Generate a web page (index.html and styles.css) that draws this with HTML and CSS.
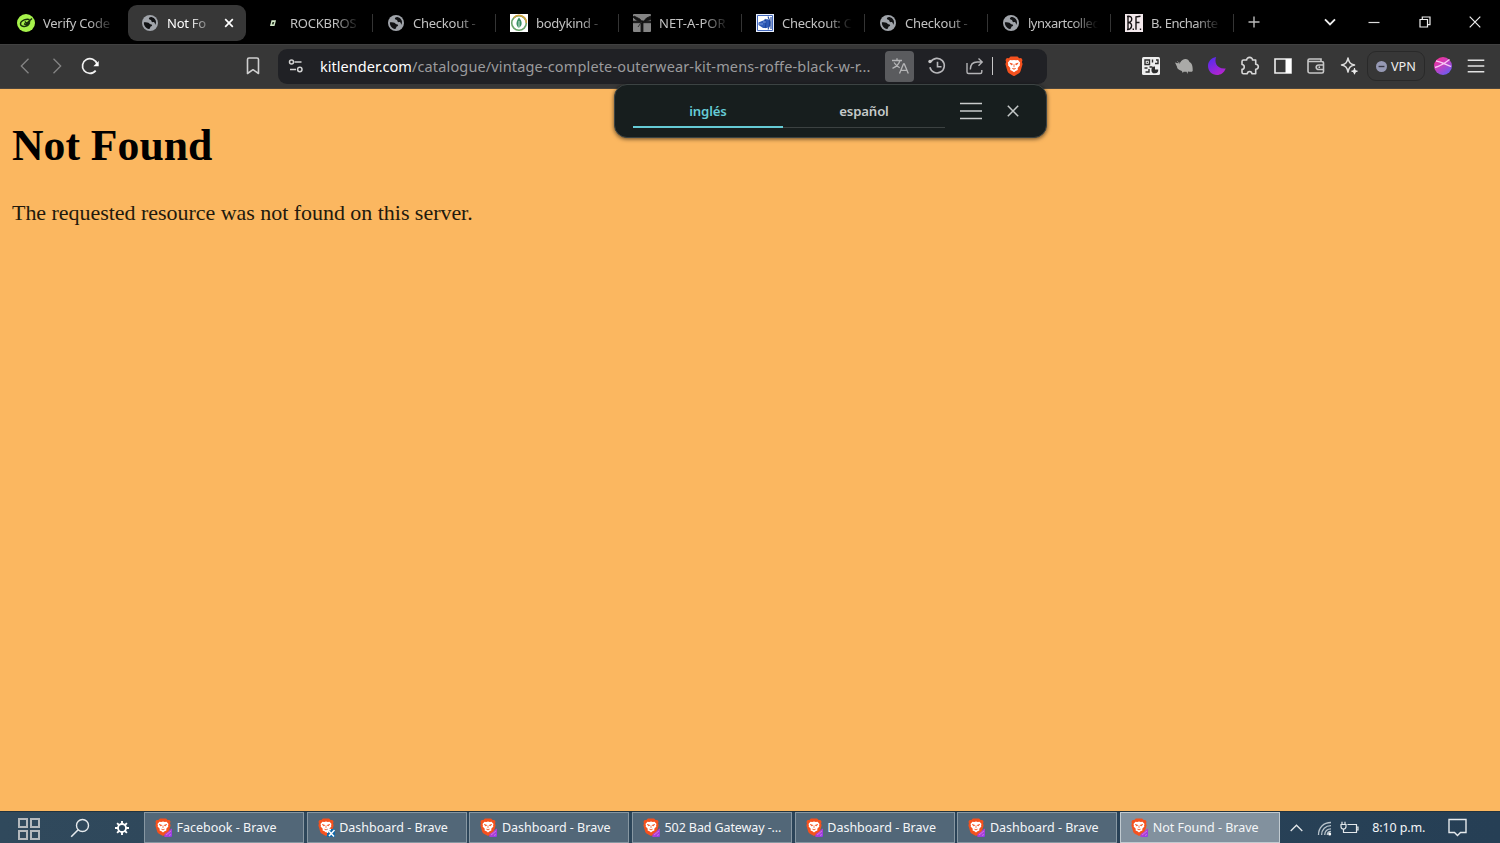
FILE: index.html
```html
<!DOCTYPE html>
<html lang="es">
<head>
<meta charset="utf-8">
<title>Not Found</title>
<link rel="stylesheet" href="styles.css">
</head>
<body>
<svg class="defs" width="0" height="0" aria-hidden="true">
  <defs>
    <linearGradient id="moonFill" x1="0" y1="0" x2="0.6" y2="1"><stop offset="0" stop-color="#4a2cf0"/><stop offset="1" stop-color="#b224d0"/></linearGradient>
    <linearGradient id="avatarFill" x1="0" y1="0" x2="0.7" y2="1"><stop offset="0" stop-color="#ff2f8a"/><stop offset="0.5" stop-color="#c93fc0"/><stop offset="1" stop-color="#6a5cf0"/></linearGradient>
    <linearGradient id="badgeFill" x1="0" y1="0" x2="1" y2="1"><stop offset="0" stop-color="#d63fb0"/><stop offset="1" stop-color="#8a3ff0"/></linearGradient>
  </defs>
  <symbol id="globe" viewBox="0 0 16 16">
    <circle cx="8" cy="8" r="8" fill="#a0a4aa"/>
    <path d="M8.700 1.800C7.500 2.200 6.500 3 6.600 4.100c.1 1.200 1 1.300 1.900 1.400 1 .1 1.200.6 1.300 1.200.1 1 1.100 1.300 2.200 1.100 1-.2 1.300-.2 2.100.3.300-2.900-1.800-5.900-5.400-6.300zM1.900 7.400c-.2 3.500 2.200 6.500 5.600 6.700.8-.2 1-.8 1-1.500 0-.8.4-1.100 1.200-1.300.9-.3 1.100-1.300.6-2-.5-.6-1.200-.5-2-.6-.7-.1-.9-.7-1.500-1.200-.9-.7-3.200-.4-4.900-.1z" fill="none"/>
    <path d="M1.900 7.300c1.600-.2 3.500-.2 4.600.5.900.5.900 1.300 1.900 1.400 1.500.2 2.100.7 1.500 1.600-.5.700-1.600.7-1.700 1.600-.1.700-.4 1.200-1.300 1.600C4 13.600 1.600 10.700 1.900 7.300zM9.400 2c-1.200-.2-2.600.6-2.500 1.700.1 1 1.300.9 1.900 1.300.8.500.5 1.600 1.400 2.100.8.500 1.800 0 2.400.7.500.6.200 1.400.7 2 1.900-3.200-.2-7.100-3.900-7.800z" fill="#111214"/>
  </symbol>
  <symbol id="lion" viewBox="0 0 18 20">
    <path d="M5.500.4h7l1.700 1.800 2-.1 1.300 2-.6 2 .7 1.800-2 7.200c-.4 1.200-1 1.700-2 2.400L9.900 19.700c-.6.4-1.200.4-1.800 0l-3.700-2.200c-1-.7-1.600-1.200-2-2.400L.4 7.900l.7-1.800-.6-2 1.300-2 2 .1z" fill="#f4511e"/>
    <path d="m5 4 2 .3 2-.4 2 .4 2-.3 2.200 2.700-.5 1.400.3 1.200-2.300 2.800.1 1.800-2.100 1L9 16.300l-1.700-1.400-2.100-1 .1-1.800L3 9.300l.3-1.200-.5-1.400z" fill="#fff"/>
    <path d="m4.800 7.200 2.700.7-.9 1zm8.400 0-2.700.7.900 1zM9 8.200v3m-1.800 1.200 1.800.9 1.800-.9" fill="#f4511e" stroke="#f4511e" stroke-width=".8"/>
  </symbol>
  <symbol id="braveTask" viewBox="0 0 18 20">
    <use href="#lion" width="16" height="18"/>
    <path d="M17 10.500v7c0 1-.7 1.500-1.500 1.500h-6c-.7-2 .5-3.700 2.500-4.500 1.500-.7 2.500-3 5-4z" fill="url(#badgeFill)"/>
    <path d="m11 17 5-4m-2 4.500 2-1" stroke="#e58be9" stroke-width=".7"/>
  </symbol>
</svg>

<header class="tabstrip">
  <div class="tab first">
    <svg class="fav" viewBox="0 0 18 18"><circle cx="9" cy="9" r="9" fill="#a6f34b"/><path d="M15 4.500 9.700 9.300 7.800 7.500M12.400 5.600C10.500 4.500 3.500 6 3.500 10c0 3.500 7.500 3.600 9.200-1.500M7 9.800l3 1.200 3-4" fill="none" stroke="#17300a" stroke-width="1.500"/></svg>
    <span class="label">Verify Code</span>
  </div>
  <div class="tab active">
    <div class="pill">
      <svg class="fav small"><use href="#globe"/></svg>
      <span class="label">Not Fo</span>
      <svg class="tabclose" viewBox="0 0 10 10"><path d="m1.200 1.200 7.600 7.600m0-7.600-7.600 7.600" stroke="#fff" stroke-width="1.700"/></svg>
    </div>
  </div>
  <div class="tab">
    <svg class="fav" viewBox="0 0 18 18"><path d="M7.500 6.300H12L10.500 12H6z" fill="#d3e8c9"/><path d="m8.500 7.900 1.800.1-.8 2.400-1.700-.1z" fill="#24351e"/></svg>
    <span class="label">ROCKBROS</span>
  </div>
  <div class="tab"><svg class="fav small"><use href="#globe"/></svg><span class="label">Checkout -</span></div>
  <div class="tab">
    <svg class="fav" viewBox="0 0 18 18"><path d="M0 0h18v18H0z" fill="#fff"/><circle cx="9" cy="9" r="7.300" fill="none" stroke="#6aa36a" stroke-width="1.600"/><path d="M3.700 3.700A7.300 7.300 0 0 1 16.300 9" fill="none" stroke="#d5a33e" stroke-width="1.500"/><path d="M9 3.500c3.300 3.800 3.800 7.800-.1 10.400C5.400 11.400 5.900 7.500 9 3.500z" fill="#3d9167"/><path d="M9 7v7" stroke="#e3f4e4" stroke-width=".8" fill="none"/></svg>
    <span class="label">bodykind -</span>
  </div>
  <div class="tab">
    <svg class="fav" viewBox="0 0 18 18"><rect width="18" height="18" rx="1" fill="#858585"/><path d="M8 7v11h2V7zM0 7.200v1.500h18V7.200zM9 8 4 6.500 0 3.200 1 2l6 3zm1 0 3.500-4L18 2v3.500z" fill="#151515" stroke="#151515" stroke-width=".8"/><path d="M8.500 8 5 13" stroke="#333"/></svg>
    <span class="label wide">NET-A-POR</span>
  </div>
  <div class="tab">
    <svg class="fav" viewBox="0 0 18 18"><path d="M0 0h18v18H0z" fill="#e8effc"/><path d="M1.500 1.500h15v15h-15z" fill="#fff" stroke="#4469bd"/><path d="M2.500 8.500 6 7l5-2 3.500 2v5L11 14H7l-4.500-3z" fill="#305cb8"/><path d="M12 2.500c2 4 2 9 0 13M9 5c1.200 3 1.200 6 0 9M15 3v12" fill="none" stroke="#1e459d" stroke-width="1.100"/><path d="M3 10h4m0-2h3" stroke="#8da9e4" stroke-width=".8"/></svg>
    <span class="label">Checkout: C</span>
  </div>
  <div class="tab"><svg class="fav small"><use href="#globe"/></svg><span class="label">Checkout -</span></div>
  <div class="tab"><svg class="fav small"><use href="#globe"/></svg><span class="label tight">lynxartcollec</span></div>
  <div class="tab">
    <svg class="fav" viewBox="0 0 18 18"><path d="M0 0h18v18H0z" fill="#f3e9ec"/><path d="M3 2v14M2 2.500c6-1.500 6 5 1.500 6 5 .5 3.500 7.500-1.500 7M11 2.500v13.200M10.500 3l5-.7M11 8.500h3.500M8.300 14.500v1.500M15.500 14.500v1.500" fill="none" stroke="#171315" stroke-width="1.400"/></svg>
    <span class="label tight">B. Enchante</span>
  </div>
  <svg class="newtab" viewBox="0 0 12 12"><path d="M6 .5v11M.5 6h11" stroke="#bbb" stroke-width="1.400"/></svg>
  <div class="window">
    <svg width="12" height="8" viewBox="0 0 12 8"><path d="m1 1.300 5 5 5-5" fill="none" stroke="#eee" stroke-width="1.900"/></svg>
    <svg width="12" height="12" viewBox="0 0 12 12"><path d="M.5 6.500h11" stroke="#ddd" stroke-width="1.200"/></svg>
    <svg width="12" height="12" viewBox="0 0 12 12"><path d="M1 3.500h7.500V11H1zM3.300 3.500V1H11v7.700H8.500" fill="none" stroke="#eee" stroke-width="1.200"/></svg>
    <svg width="12" height="12" viewBox="0 0 12 12"><path d="m.7.700 10.600 10.600m0-10.600L.7 11.300" stroke="#eee" stroke-width="1.200"/></svg>
  </div>
</header>

<nav class="toolbar">
  <svg class="ico back" viewBox="0 0 20 20"><path d="M13.500 2.700 6.300 10l7.200 7.300" fill="none" stroke="#858585" stroke-width="1.300"/></svg>
  <svg class="ico forward" viewBox="0 0 20 20"><path d="M6.500 2.700 13.700 10l-7.200 7.300" fill="none" stroke="#858585" stroke-width="1.300"/></svg>
  <svg class="ico reload" viewBox="0 0 20 20"><path d="M15.700 14.600A7.400 7.400 0 1 1 17 8" fill="none" stroke="#f2f2f2" stroke-width="1.700"/><path d="M18.700 5v5.300h-5.300z" fill="#fff"/></svg>
  <svg class="ico bookmark" viewBox="0 0 20 20"><path d="M4.500 3.500c0-1 .6-1.500 1.500-1.500h8c.9 0 1.500.5 1.500 1.500v14L10 13.700l-5.500 3.800z" fill="none" stroke="#cfcfcf" stroke-width="1.600" stroke-linejoin="round"/></svg>
  <div class="address">
    <svg class="tune" viewBox="0 0 16 16"><path d="M6.500 4h7M2 11.500h6" stroke="#d2d2d2" stroke-width="1.500"/><circle cx="3.500" cy="4" r="2" fill="none" stroke="#d2d2d2" stroke-width="1.500"/><circle cx="11.800" cy="11.500" r="2.200" fill="none" stroke="#d2d2d2" stroke-width="1.500"/></svg>
    <div class="url"><b>kitlender.com</b>/catalogue/vintage-complete-outerwear-kit-mens-roffe-black-w-r...</div>
    <div class="translate"><svg width="18" height="18" viewBox="0 0 18 18"><path d="M1 3.500h10M6 1.300v2.200M9 3.500c-1 3.500-4 6.300-7.500 7.800M3 5.500c1.500 2.500 3.500 4 5.700 5.200M8.500 16.500l4-9.500h.8l4 9.500M10 13.300h6" fill="none" stroke="#b5b5b7" stroke-width="1.300"/></svg></div>
    <svg class="ico history" viewBox="0 0 20 20"><path d="M3.800 5.800a7.300 7.300 0 1 1-.9 5.500M10.500 5.800v5h4" fill="none" stroke="#b8b8bb" stroke-width="1.600"/><circle cx="3" cy="5.500" r="1.700" fill="#c8c8c8"/></svg>
    <svg class="ico share" viewBox="0 0 20 20"><path d="M2 7v9c0 1 .5 1.500 1.500 1.500h11.800c.8 0 1.500-.5 1.500-1.500v-2M5.300 13.500c0-5 3-7.500 7-7.500h4.500M13.500 2.500 17.200 6l-3.700 3.700" fill="none" stroke="#b4b4b7" stroke-width="1.400"/></svg>
    <i class="divider"></i>
    <svg class="shield" viewBox="0 0 18 20"><use href="#lion"/></svg>
  </div>
  <div class="extensions">
    <svg class="ico" viewBox="0 0 20 20"><rect x="1" y="1" width="18" height="18" rx="1.500" fill="#eee"/><path d="M4 4h4.500v4.500H4zM3.500 12h3m-2 4H8v-3M11.500 3.500v3M14 7.500h3V4h-2M8.500 11h3" fill="none" stroke="#2d2d2d" stroke-width="1.400"/><path d="M5.700 5.700h1.200v1.200H5.700z" fill="#2d2d2d"/><path d="M14 10.500v3h3.200a3.400 3.400 0 1 1-3.200-3z" fill="#2d2d2d"/></svg>
    <svg class="ico" viewBox="0 0 20 20"><path d="m1 6.500 3 .7 2.300-.8C7.300 4.500 9.500 3 11.500 3c2 0 3.300 1 4 3 2 1 3.500 3.500 3.200 9-.5 1-2.700 1-4.700.5l-.6 2.500-.8-2.300H9.600l-.8 1.300-1-2C4.200 13.800 3 12.500 3 10.800z" fill="#aaaaa8"/><path d="m3 5.200 3 2.500" stroke="#777"/></svg>
    <svg class="ico" viewBox="0 0 20 20"><path d="M9.200 1C7 5.500 9.500 13.500 18.700 12.500 17 17 13.500 19 10 19c-5 0-9-4-9-9 0-4.500 3.300-8.200 8.200-9z" fill="url(#moonFill)"/></svg>
    <svg class="ico" viewBox="0 0 20 20"><path d="M3.500 4h3.200c-.3-3.500 6.100-3.500 5.800 0h3.200v4.300c3.500.2 3.500 4.700 0 4.900v4.600h-3.800c-.2-3-4.400-3-4.600 0H3.500c-1 0-1.500-.5-1.500-1.500v-3c3-.2 3-4.600 0-4.800v-3C2 4.500 2.500 4 3.500 4z" fill="none" stroke="#d7d7d7" stroke-width="1.600" stroke-linejoin="round"/></svg>
    <svg class="ico" viewBox="0 0 20 20"><path d="M2 3h16v14H2z" fill="none" stroke="#eee" stroke-width="1.600"/><path d="M12.500 3H18v14h-5.500z" fill="#fff"/></svg>
    <svg class="ico" viewBox="0 0 20 20"><path d="M2 5.500h13.500c1.200 0 2 .5 2 1.500v8.500c0 1-.5 1.500-1.500 1.500H4c-1.300 0-2-.7-2-2V4.500C2 3.500 2.700 3 3.500 3H15v2.500M17.500 9H13c-1.800 0-2.800 1-2.800 2.200s1 2.300 2.800 2.300h4.500z" fill="none" stroke="#c8c8c8" stroke-width="1.600"/><circle cx="13.300" cy="11.200" r=".9" fill="#ccc"/></svg>
    <svg class="ico" viewBox="0 0 20 20"><path d="M9 2c.9 4.500 2 6 6.500 7-4.500 1-5.600 2.500-6.500 7-.9-4.500-2-6-6.500-7C7 8 8.100 6.500 9 2z" fill="none" stroke="#ddd" stroke-width="1.500" stroke-linejoin="round"/><path d="M15.500 12.200c.3 2 .9 2.600 2.900 3-2 .4-2.600 1-2.900 3-.3-2-.9-2.600-2.900-3 2-.4 2.600-1 2.900-3z" fill="#eee" stroke="#eee"/></svg>
  </div>
  <div class="vpn"><svg width="11" height="11" viewBox="0 0 12 12"><circle cx="6" cy="6" r="6" fill="#9699b4"/><path d="M2.800 6h6.400" stroke="#363743" stroke-width="1.500"/></svg><span>VPN</span></div>
  <svg class="ico avatar" viewBox="0 0 20 20"><circle cx="10" cy="10" r="9" fill="url(#avatarFill)"/><path d="M3 5c4 .5 10 3.500 15 5.500M2 11.500C8 10 12 7 16.500 3.500" fill="none" stroke="#f8c8f5" stroke-width="1.300"/></svg>
  <svg class="ico menu" viewBox="0 0 20 20"><path d="M1.700 4.200h16.600M1.700 10h16.600M1.700 15.800h16.600" stroke="#e2e2e2" stroke-width="1.500"/></svg>
</nav>

<main class="page">
  <h1>Not Found</h1>
  <p>The requested resource was not found on this server.</p>
</main>

<aside class="bubble">
  <div class="lang selected">inglés</div>
  <div class="lang">español</div>
  <svg class="lines" viewBox="0 0 22 18"><path d="M0 1.500h22M0 9h22M0 16.500h22" stroke="#c9cccc" stroke-width="1.700"/></svg>
  <svg class="close" viewBox="0 0 12 12"><path d="m.8.800 10.400 10.400m0-10.400L.8 11.200" stroke="#c5c9c9" stroke-width="1.500"/></svg>
</aside>

<footer class="taskbar">
  <svg class="start" viewBox="0 0 22 22"><path d="M1 1h8v8H1zM13 1h8v8h-8zM1 13h8v8H1zM13 13h8v8h-8z" fill="none" stroke="#b4b9bd" stroke-width="2"/></svg>
  <svg class="search" viewBox="0 0 20 20"><circle cx="12.500" cy="7.500" r="6" fill="none" stroke="#e6eaed" stroke-width="1.400"/><path d="m8.200 11.800-7 7" stroke="#e6eaed" stroke-width="1.600"/></svg>
  <svg class="gear" viewBox="0 0 14 14"><circle cx="7" cy="7" r="4" fill="none" stroke="#fff" stroke-width="1.800"/><path d="M7 0v3m0 8v3M0 7h3m8 0h3M2.100 2.100l2 2m5.800 5.800 2 2m0-9.800-2 2M4.100 9.900l-2 2" stroke="#fff" stroke-width="1.900"/></svg>
  <div class="tasks">
    <div class="task"><svg><use href="#braveTask"/></svg><span>Facebook - Brave</span></div>
    <div class="task"><svg viewBox="0 0 18 20"><use href="#lion" width="16" height="18"/><path d="M9 11h8v8H9z" fill="#1268a8"/><path d="m9.500 11.500 6.500 7M11 18l5.500-6M10 11.500h3m-3.500 0V15" stroke="#fff" stroke-width="1.500"/></svg><span>Dashboard - Brave</span></div>
    <div class="task"><svg><use href="#braveTask"/></svg><span>Dashboard - Brave</span></div>
    <div class="task"><svg><use href="#braveTask"/></svg><span class="gateway">502 Bad Gateway -...</span></div>
    <div class="task"><svg><use href="#braveTask"/></svg><span>Dashboard - Brave</span></div>
    <div class="task"><svg><use href="#braveTask"/></svg><span>Dashboard - Brave</span></div>
    <div class="task current"><svg><use href="#braveTask"/></svg><span>Not Found - Brave</span></div>
  </div>
  <svg class="chevron" viewBox="0 0 13 8"><path d="m.7 7 5.800-5.800L12.300 7" fill="none" stroke="#e4e8eb" stroke-width="1.300"/></svg>
  <svg class="wifi" viewBox="0 0 15 15"><path d="M1.500 14C1.500 6.500 6.500 1.500 14 1.500M4.600 14c0-5.500 3.900-9.300 9.400-9.300M7.700 14c0-3.800 2.500-6.200 6.300-6.200M10.300 14c0-2.200 1.500-3.500 3.700-3.500" fill="none" stroke="#b9c4cc" stroke-width="1.300"/><circle cx="12.700" cy="12.900" r="1.500" fill="#fff"/></svg>
  <svg class="battery" viewBox="0 0 19 14"><path d="M7.500 3.500h9v8H6M16.500 6H18v3h-1.500M2 .8v2.500m3-2.500v2.500M1 3.500h5v2c0 2-1 2.500-2.500 2.500S1 7.500 1 5.500zM3.500 8v3.500H6" fill="none" stroke="#e2e7ea" stroke-width="1.200"/></svg>
  <span class="clock">8:10 p.m.</span>
  <svg class="notice" viewBox="0 0 19 19"><path d="M1 1.500h17v13h-5.500l-3 3-3-3H1z" fill="none" stroke="#e6eaed" stroke-width="1.400"/></svg>
</footer>
</body>
</html>
```
FILE: styles.css
```css
* { box-sizing: border-box; }
body {
  position: relative;
  display: flex;
  flex-direction: column;
  width: 1500px;
  height: 843px;
  margin: 0;
  overflow: hidden;
  background: #fbb760;
  font-family: "Noto Sans", "Open Sans", sans-serif;
}
svg { display: block; flex: none; }
.defs { position: absolute; }

/* Tabs */
.tabstrip { display: flex; align-items: center; height: 44px; flex: none; padding: 0 0 0 3.500px; background: #000; color: #c2c2c2; }
.tab { display: flex; align-items: center; width: 123px; height: 18px; padding: 0 12px 0 14.500px; flex: none; border-right: 1px solid #343434; margin-top: 2px; }
.tab.first { border: 0; padding-left: 13.500px; }
.tab.active { height: 36px; padding: 0 3px 0 1.500px; border: 0; }
.pill { display: flex; align-items: center; width: 118px; height: 36px; flex: none; padding: 0 12px 0 14px; border-radius: 9px; background: #373737; color: #fff; }
.fav { width: 18px; height: 18px; margin-right: 8px; }
.fav.small { width: 16px; height: 16px; margin: 0 9px 0 1px; }
.pill .fav.small { margin: 0 9px 0 0; }
.label { flex: 1; min-width: 0; white-space: nowrap; font-size: 13px; line-height: 18px; letter-spacing: -0.25px; mask-image: linear-gradient(to right, #000 calc(100% - 26px), transparent); }
.label.wide { letter-spacing: 0; }
.label.tight { letter-spacing: -0.5px; }
.pill .label { flex: 0 0 48px; }
.tabclose { width: 10px; height: 10px; margin-left: 9px; }
.newtab { width: 12px; height: 12px; margin-left: 14px; }
.window { display: grid; grid-template-columns: 52px 36px 66px 34px; justify-items: center; align-items: center; margin-left: auto; width: 196px; }

/* Toolbar */
.toolbar { display: flex; align-items: center; height: 45px; flex: none; background: #373737; border-top: 1px solid #414141; border-bottom: 1px solid #4d463d; padding-bottom: 1px; }
.ico { width: 20px; height: 20px; }
.back { margin-left: 15px; }
.forward { margin-left: 12px; }
.reload { margin-left: 13px; }
.bookmark { margin: 0 15px 0 143px; }
.address { display: flex; align-items: center; width: 769px; height: 35px; border-radius: 9px; background: #202125; }
.tune { width: 16px; height: 16px; margin: 0 16px 0 10px; }
.url { width: 565px; white-space: nowrap; color: #9b9b9d; font-size: 14.5px; letter-spacing: 0.145px; }
.url b { color: #fff; font-weight: 400; letter-spacing: 0.03px; }
.translate { display: grid; place-items: center; width: 29px; height: 31px; border-radius: 4px; background: #5a5b5e; }
.history { margin-left: 13px; }
.share { margin-left: 18px; }
.divider { width: 1px; height: 18px; margin: 0 12px 0 7px; background: #c7c7c7; }
.shield { width: 18px; height: 20px; }
.extensions { display: flex; gap: 13px; margin-left: 94px; }
.vpn { display: flex; align-items: center; gap: 4px; width: 58px; height: 30px; margin-left: 8px; padding-left: 8px; border: 1px solid #292929; border-radius: 9px; color: #eee; font-size: 12.7px; }
.avatar { margin-left: 8px; }
.menu { margin-left: 13px; }

/* Error document */
.page { flex: 1; padding: 31px 12px 0; color: #000; font-family: "Liberation Serif", serif; }
.page h1 { margin: 0; font-size: 43.7px; line-height: 51px; }
.page p { margin: 28px 0 0; color: #22190d; font-size: 22px; line-height: 28px; letter-spacing: -0.035px; }

/* Translation popup */
.bubble { position: absolute; top: 84px; left: 614px; display: flex; align-items: center; width: 433px; height: 54px; padding: 0 0 0 18px; border: 1px solid #3c4343; border-radius: 13px; background: #171e1e; box-shadow: 0 1px 4px #0009; }
.lang { width: 162px; height: 34px; flex: none; padding-top: 7px; border-bottom: 1px solid #3c4242; color: #c6caca; font-size: 13.2px; font-weight: 600; line-height: 20px; letter-spacing: -0.15px; text-align: center; }
.lang.selected { width: 150px; border-bottom: 2px solid #65cbd6; color: #65cbd6; }
.lines { width: 22px; height: 18px; margin-left: 15px; }
.close { width: 12px; height: 12px; margin-left: 25px; }

/* Taskbar */
.taskbar { display: flex; align-items: center; height: 32px; flex: none; background: linear-gradient(90deg, #30495c, #263f55); color: #f4f6f8; font-size: 12.5px; border-top: 1px solid #23333e; }
.start { width: 22px; height: 22px; margin: 2px 0 0 18px; }
.search { width: 20px; height: 20px; margin-left: 30px; }
.gear { width: 14px; height: 14px; margin: 0 15px 0 25px; }
.tasks { display: grid; grid-template-columns: repeat(7, 160px); column-gap: 2.700px; height: 31px; margin-right: -.5px; }
.task { display: flex; align-items: center; padding-left: 10px; border: 1px solid #8797a2; background: #526778; }
.task svg { width: 18px; height: 20px; margin-right: 3.500px; }
.task span { white-space: nowrap; letter-spacing: 0; }
.task .gateway { letter-spacing: -0.1px; }
.task.current { background: #82919e; border-color: #c1cad0; }
.chevron { width: 13px; height: 8px; margin-left: 10px; }
.wifi { width: 15px; height: 15px; margin-left: 14px; margin-top: 2px; }
.battery { width: 19px; height: 14px; margin-left: 8px; }
.clock { width: 54px; margin-left: 13.500px; letter-spacing: -0.1px; white-space: nowrap; }
.notice { width: 19px; height: 19px; margin-left: 21.500px; }
```
